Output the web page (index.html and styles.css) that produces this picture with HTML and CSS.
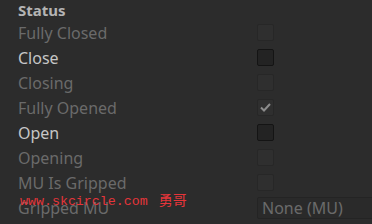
FILE: index.html
```html
<!DOCTYPE html>
<html>
<head>
<meta charset="utf-8">
<link rel="stylesheet" href="styles.css">
</head>
<body>
<div class="panel">
  <div class="header">Status</div>
  <div class="row disabled"><span class="label">Fully Closed</span><span class="box"></span></div>
  <div class="row"><span class="label">Close</span><span class="box active"></span></div>
  <div class="row disabled"><span class="label">Closing</span><span class="box"></span></div>
  <div class="row disabled"><span class="label">Fully Opened</span><span class="box"><svg width="13" height="11" viewBox="0 0 13 11"><path d="M2 5.5 L5 8.5 L11 2" fill="none" stroke="#8c8c8c" stroke-width="2"/></svg></span></div>
  <div class="row"><span class="label">Open</span><span class="box active"></span></div>
  <div class="row disabled"><span class="label">Opening</span><span class="box"></span></div>
  <div class="row disabled"><span class="label">MU Is Gripped</span><span class="box"></span></div>
  <div class="row disabled"><span class="label">Gripped MU</span><span class="field">None (MU)</span></div>
  <div class="watermark">www.skcircle.com <span class="cjk">勇哥</span></div>
</div>
</body>
</html>
```
FILE: styles.css
```css
html, body {
  margin: 0;
  padding: 0;
  background: #2c2c2c;
  overflow: hidden;
}
.panel {
  position: relative;
  width: 372px;
  height: 224px;
  overflow: hidden;
  font-family: "Noto Sans", "Open Sans", sans-serif;
  font-size: 16px;
}
.header {
  height: 20px;
  line-height: 20px;
  padding-left: 18px;
  font-weight: bold;
  font-size: 15px;
  color: #b4b4b4;
}
.row {
  height: 25px;
  display: flex;
  align-items: center;
  padding-left: 18px;
  color: #c6c6c6;
}
.row.disabled {
  color: #6a6a6a;
}
.label {
  width: 239px;
  flex: none;
  white-space: nowrap;
}
.box {
  width: 15px;
  height: 15px;
  border: 1px solid #272727;
  border-radius: 2px;
  background: #2f2f2f;
  display: flex;
  align-items: center;
  justify-content: center;
}
.box.active {
  background: #232323;
  border-color: #141414;
}
.field {
  flex: none;
  width: 140px;
  height: 20px;
  line-height: 20px;
  border: 1px solid #242424;
  border-radius: 2px;
  background: #2a2a2a;
  padding-left: 4px;
  color: #6a6a6a;
}
.watermark {
  position: absolute;
  left: 20px;
  top: 189px;
  font-family: "Liberation Mono", monospace;
  font-size: 13.3px;
  color: #e5353a;
  white-space: nowrap;
}
.cjk {
  font-family: "Noto Sans CJK SC", sans-serif;
  font-size: 14px;
  margin-left: 3px;
}
```
